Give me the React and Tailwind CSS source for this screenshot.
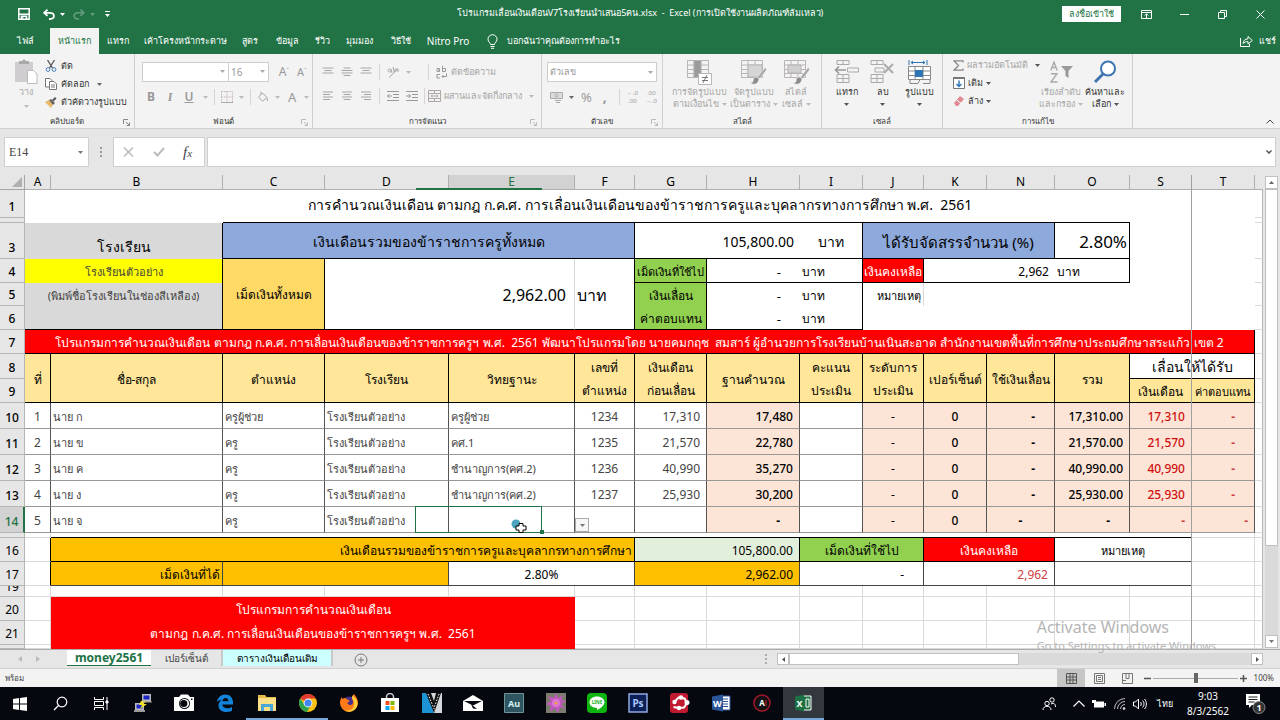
import React from "react";

/* ---------- small helpers ---------- */
const Caret = ({ className = "text-[#777]" }) => (
  <svg width="5" height="3" viewBox="0 0 5 3" className={`shrink-0 ${className}`} aria-hidden="true">
    <path d="M0 0h5L2.5 3z" fill="currentColor" />
  </svg>
);

const Launcher = ({ className = "text-[#888]" }) => (
  <svg width="7" height="7" viewBox="0 0 7 7" className={className} fill="none" stroke="currentColor" aria-hidden="true">
    <path d="M.5 5V.5H5M3 3l3.3 3.3M6.5 3.5v3h-3" />
  </svg>
);

const Group = ({ label, width, launcher, launcherTone, children }) => (
  <section aria-label={label} className={`relative flex h-[74px] shrink-0 flex-col border-r border-[#cfcfcf] [&_svg]:shrink-0 ${width}`}>
    <div className="h-[60px]">{children}</div>
    <div className="text-center text-[8px] leading-[14px] text-[#333]">{label}</div>
    {launcher && (
      <button aria-label={`${label} …`} className="absolute right-1 bottom-0.5">
        <Launcher className={launcherTone} />
      </button>
    )}
  </section>
);

const TopTab = ({ width, active, latin, children }) => (
  <button
    className={`h-[26px] shrink-0 text-center leading-[24px] whitespace-nowrap ${width} ${latin ? "text-[10px]" : "text-[9px]"} ${
      active ? "bg-[#f3f3f3] text-[#217346]" : "text-white"
    }`}
  >
    {children}
  </button>
);

/* ---------- title bar and tabs ---------- */
const TitleBar = () => (
  <header className="bg-[#217346] text-white">
    <div className="relative flex h-7 items-center">
      <div className="flex items-center pl-[18px]">
        <button aria-label="Save">
          <svg width="12" height="12" viewBox="0 0 12 12" fill="none" stroke="#fff">
            <path d="M.8.8h10.4v10.4H.8z" strokeWidth="1.5" />
            <path d="M1 6.2h10M3.5 11V8.3h5V11" strokeWidth="1.6" />
            <path d="M4.8 9v2" />
          </svg>
        </button>
        <button aria-label="Undo" className="ml-[13px] flex items-center gap-[5px]">
          <svg width="12" height="11" viewBox="0 0 12 11" fill="none" stroke="#fff" strokeWidth="1.8">
            <path d="M4.5.7L1.2 3.8l3.3 3.1M1.5 3.8h5.2c2.3 0 4.2 1.3 4.2 3.3S9 10 7 10H6" />
          </svg>
          <Caret className="text-white" />
        </button>
        <button aria-label="Redo" className="ml-2 flex items-center gap-[5px] opacity-30">
          <svg width="12" height="11" viewBox="0 0 12 11" fill="none" stroke="#fff" strokeWidth="1.6">
            <path d="M7.5.7l3.3 3.1-3.3 3.1M10.5 3.8H5.3C3 3.8 1.1 5.1 1.1 7.1S3 10 5 10h1" />
          </svg>
          <Caret className="text-white" />
        </button>
        <button aria-label="Customize" className="ml-2.5">
          <svg width="5" height="6" viewBox="0 0 5 6" fill="#fff">
            <path d="M0 0h5v1H0zM0 3h5L2.5 6z" />
          </svg>
        </button>
      </div>
      <h1 className="pointer-events-none absolute inset-x-0 top-[4px] text-center text-[9px] leading-[18px] whitespace-pre">
        โปรแกรมเลื่อนเงินเดือนV7โรงเรียนนำเสนอ5คน.xlsx  -  Excel (การเปิดใช้งานผลิตภัณฑ์ล้มเหลว)
      </h1>
      <div className="ml-auto flex items-center">
        <button className="h-4 w-[59px] bg-white text-[9px] leading-4 text-[#217346]">ลงชื่อเข้าใช้</button>
        <button aria-label="Ribbon options" className="ml-5">
          <svg width="11" height="9" viewBox="0 0 11 9" fill="none" stroke="#fff" className="block">
            <path d="M.5.5h10v8H.5zM.5 2.5h10M5.5 8V4M3.8 5.5l1.7-1.7 1.7 1.7" />
          </svg>
        </button>
        <button aria-label="Minimize" className="ml-[28px]">
          <svg width="9" height="9" viewBox="0 0 9 9" stroke="#fff" className="block"><path d="M0 4.5h9" /></svg>
        </button>
        <button aria-label="Restore" className="ml-[29px]">
          <svg width="9" height="9" viewBox="0 0 9 9" fill="none" stroke="#fff" className="block">
            <path d="M.5 2.5h6v6h-6zM2.5 2.5v-2h6v6h-2" />
          </svg>
        </button>
        <button aria-label="Close" className="mr-[15px] ml-[29px]">
          <svg width="9" height="9" viewBox="0 0 9 9" stroke="#fff" className="block"><path d="M.5.5l8 8M8.5.5l-8 8" /></svg>
        </button>
      </div>
    </div>
    <nav className="flex h-[26px]">
      <TopTab width="w-[50px]">ไฟล์</TopTab>
      <TopTab width="w-[49px]" active>หน้าแรก</TopTab>
      <TopTab width="w-[38px]">แทรก</TopTab>
      <TopTab width="w-[96px]">เค้าโครงหน้ากระดาษ</TopTab>
      <TopTab width="w-[34px]">สูตร</TopTab>
      <TopTab width="w-[40px]">ข้อมูล</TopTab>
      <TopTab width="w-[31px]">รีวิว</TopTab>
      <TopTab width="w-[43px]">มุมมอง</TopTab>
      <TopTab width="w-[40px]">วิธีใช้</TopTab>
      <TopTab width="w-[54px]" latin>Nitro Pro</TopTab>
      <button className="ml-3 flex items-center gap-[9px] text-[9px] leading-[24px] whitespace-nowrap">
        <svg width="11" height="15" viewBox="0 0 11 15" fill="none" stroke="#fff">
          <path d="M3.5 10.5c0-1.8-2.5-2.6-2.5-5.3a4.5 4.5 0 019 0c0 2.7-2.5 3.5-2.5 5.3zM3.5 12.5h4M4 14.3h3" />
        </svg>
        บอกฉันว่าคุณต้องการทำอะไร
      </button>
      <button className="ml-auto flex items-center gap-1.5 pr-1 text-[9px] leading-[24px]">
        <svg width="13" height="12" viewBox="0 0 13 12" fill="none" stroke="#fff">
          <path d="M.5 3v8.5h9V9M3 8.5C3.3 5.5 5 4 8 3.8V1.5l4.3 4L8 9V6.600C5.8 6.6 4.2 7.2 3 8.5z" />
        </svg>
        แชร์
      </button>
    </nav>
  </header>
);

/* ---------- ribbon ---------- */
const Lines = ({ w = [10, 10, 10, 10], align = "start" }) => (
  <svg width="12" height="10" viewBox="0 0 12 10" stroke="#a6a6a6" aria-hidden="true">
    {w.map((n, i) => {
      const x = align === "start" ? 1 : align === "end" ? 11 - n : 6 - n / 2;
      return <path key={i} d={`M${x} ${i * 2.5 + 1}h${n}`} />;
    })}
  </svg>
);

const Big = ({ icon, a, b, width, dark }) => (
  <button className={`flex shrink-0 flex-col items-center pt-[4px] text-[9px] leading-[12px] whitespace-nowrap ${width} ${dark ? "text-[#333]" : "text-[#a6a6a6]"}`}>
    <span className="flex h-[28px] items-center">{icon}</span>
    <span className="block">{a}</span>
    <span className="flex h-3 items-center gap-[3px]">
      {b}
      <Caret className={dark ? "text-[#555]" : "text-[#bbb]"} />
    </span>
  </button>
);

const TableGrid = ({ brush, children }) => (
  <svg width="27" height="27" viewBox="0 0 27 27" fill="none" stroke="#b8b4b8">
    <path d="M1.500 1.500h21v17h-21zM1.500 6h21M1.500 10.500h21M1.500 14.500h21M8 1.500v17M15 1.500v17" />
    {children}
    {brush && (
      <>
        <path d="M25.500 8l-8 10 2 2 7-9z" fill="#a6a6a6" stroke="#f3f3f3" strokeWidth=".6" />
        <path d="M17 18c-3 0-4 2-4 4 0 1-1 2-3 2 3 2 8 2 9-4z" fill="#8c8c8c" stroke="#f3f3f3" strokeWidth=".6" />
      </>
    )}
  </svg>
);

const Ribbon = () => (
  <div className="relative flex h-[75px] overflow-hidden border-b border-[#d0d0d0] bg-[#f3f3f3]">
    <Group label="คลิปบอร์ด" width="w-[135px]" launcher>
      <div className="flex pl-[14px]">
        <button className="flex w-[24px] flex-col items-center pt-[4px] text-[9px] leading-[14px] text-[#a6a6a6]">
          <svg width="24" height="27" viewBox="0 0 24 27">
            <path d="M1 4h18v20H1z" fill="#cfcdcf" />
            <path d="M5 3h3l2-2 2 2h3v3H5z" fill="#a9a9a9" />
            <path d="M13.500 12.500h6l3.500 3.500v9.500h-9.500z" fill="#fff" stroke="#bbb" />
          </svg>
          วาง
          <Caret className="mt-1.5 text-[#bbb]" />
        </button>
        <div className="ml-[7px] flex flex-col pt-[3px] text-[9px] leading-[18px] whitespace-nowrap text-[#333]">
          <button className="flex items-center gap-[4px]">
            <svg width="12" height="12" viewBox="0 0 12 12" fill="none">
              <path d="M2.500 0l5 8M9.500 0l-5 8" stroke="#555" strokeWidth="1.300" />
              <circle cx="3" cy="9.500" r="1.900" stroke="#4a7ebb" />
              <circle cx="9" cy="9.500" r="1.900" stroke="#4a7ebb" />
            </svg>
            ตัด
          </button>
          <button className="flex items-center gap-[4px]">
            <svg width="12" height="12" viewBox="0 0 12 12" fill="#fff" stroke="#777">
              <path d="M.5.500h4.500l2 2v6.500H.5z" />
              <path d="M4.500 3.500H9l2.500 2.500v5.500h-7zM6 7h4M6 9h4" />
            </svg>
            คัดลอก
            <Caret className="ml-1 text-[#666]" />
          </button>
          <button className="flex items-center gap-[4px]">
            <svg width="12" height="11" viewBox="0 0 12 11">
              <path d="M0 5l4-2 4 4-2 4z" fill="#e8b86a" />
              <path d="M4 3l2-1 4 4-2 2z" fill="#666" />
              <path d="M7 3l3-3 1.500 1.500-3 3z" fill="#555" />
            </svg>
            ตัวคัดวางรูปแบบ
          </button>
        </div>
      </div>
    </Group>

    <Group label="ฟอนต์" width="w-[178px]" launcher launcherTone="text-[#bbb]">
      <div className="flex items-center pt-2 pl-[7px]">
        <div className="relative">
          <select aria-label="ฟอนต์" defaultValue="" className="block h-5 w-[87px] appearance-none border border-[#cdcdcd] bg-white"><option></option></select>
          <Caret className="pointer-events-none absolute top-2 right-1 text-[#aaa]" />
        </div>
        <div className="relative">
          <select aria-label="ขนาดฟอนต์" className="block h-5 w-[40px] appearance-none border border-l-0 border-[#cdcdcd] bg-white pl-[2px] text-[10px] text-[#999]"><option>16</option></select>
          <Caret className="pointer-events-none absolute top-2 right-1 text-[#aaa]" />
        </div>
        <button className="ml-1.5 w-[18px] text-[12px] leading-4 text-[#999]">A<sup className="text-[7px]">ˆ</sup></button>
        <button className="w-[18px] text-[11px] leading-4 text-[#999]">A<sup className="text-[7px]">ˇ</sup></button>
      </div>
      <div className="flex h-6 items-center pt-1.5 pl-[8px] text-[12px] leading-4 text-[#999]">
        <button className="w-4 font-bold">B</button>
        <button className="ml-[3px] w-4 font-['Liberation_Serif',serif] font-bold italic">I</button>
        <button className="ml-[3px] w-4 font-semibold underline">U</button>
        <Caret className="ml-1.5 text-[#bbb]" />
        <span className="mx-1.5 h-4 w-px bg-[#d5d5d5]" />
        <svg width="12" height="12" viewBox="0 0 12 12" fill="none" stroke="#c5b5bb"><path d="M.5.500h11v11H.5zM6 .5v11M.5 6h11" strokeDasharray="1.500 1" /><path d="M0 11.500h12" stroke="#aaa" /></svg>
        <Caret className="ml-1.5 text-[#bbb]" />
        <span className="mx-1.5 h-4 w-px bg-[#d5d5d5]" />
        <svg width="12" height="12" viewBox="0 0 12 12" fill="none" stroke="#a6a6a6"><path d="M1.500 6L5.500 2l4.500 4.500-4.500 3.800zM4 3.500V.5M10.500 7.500v2.500" /></svg>
        <Caret className="ml-[6px] text-[#bbb]" />
        <button className="ml-2 text-[13px]">A</button>
        <Caret className="ml-2 text-[#bbb]" />
      </div>
    </Group>

    <Group label="การจัดแนว" width="w-[229px]" launcher launcherTone="text-[#bbb]">
      <div className="flex h-9 items-center gap-[7px] pl-[9px]">
        <Lines w={[11, 7, 11]} align="mid" />
        <Lines w={[7, 11, 11, 7]} align="mid" />
        <Lines w={[11, 7, 11]} align="mid" />
        <span className="h-4 w-px bg-[#d5d5d5]" />
        <svg width="12" height="12" viewBox="0 0 12 12" fill="none" stroke="#a6a6a6"><path d="M2 11.500L11 3M8 3h3v3M1 4.500a1.500 1.500 0 103 0 1.500 1.500 0 10-3 0M4 3l1 4M6 1l1.500 5M7 3.500a1.300 1.300 0 102 0" /></svg>
        <Caret className="text-[#bbb]" />
        <span className="ml-[10px] h-4 w-px bg-[#d5d5d5]" />
        <button className="flex items-center gap-1 text-[9px] leading-4 whitespace-nowrap text-[#a6a6a6]">
          <svg width="11" height="13" viewBox="0 0 11 13" fill="none" stroke="#999">
            <path d="M.5 2.500h3v3h-2c-1.300 0-1.300-1.500 0-1.500h2M6.500 0v5.500h3v-3h-3M4 8.500H1v3.500h3M10.500 7.500v3H6M7.500 9L6 10.500 7.500 12" />
          </svg>
          ตัดข้อความ
        </button>
      </div>
      <div className="flex h-3 items-center gap-[7px] pl-[9px]">
        <Lines w={[10, 7, 10, 7]} />
        <Lines w={[10, 7, 10, 7]} align="mid" />
        <Lines w={[10, 7, 10, 7]} align="end" />
        <span className="h-4 w-px bg-[#d5d5d5]" />
        <svg width="12" height="10" viewBox="0 0 12 10" stroke="#999" fill="none"><path d="M0 .5h12M6 3.500h6M6 6.500h6M0 9.500h12M5 5H.5M2.500 3L.5 5l2 2" /></svg>
        <svg width="12" height="10" viewBox="0 0 12 10" stroke="#999" fill="none"><path d="M0 .5h12M6 3.500h6M6 6.500h6M0 9.500h12M0 5h4.500M2.500 3l2 2-2 2" /></svg>
        <span className="-ml-px h-4 w-px bg-[#d5d5d5]" />
        <button className="-ml-1 flex items-center gap-[3px] text-[9px] leading-4 whitespace-nowrap text-[#a6a6a6]">
          <svg width="13" height="12" viewBox="0 0 13 12" fill="none" stroke="#b0a8a8"><path d="M.5.500h12v11H.5zM.5 3.500h12M.5 8.500h12M6.500.500v3M6.500 8.500v3M3 6h7M4.500 4.800L3 6l1.500 1.200M8.500 4.800L10 6 8.500 7.200" /></svg>
          ผสานและจัดกึ่งกลาง
          <Caret className="ml-1 text-[#bbb]" />
        </button>
      </div>
    </Group>

    <Group label="ตัวเลข" width="w-[121px]" launcher launcherTone="text-[#bbb]">
      <div className="relative ml-[5px] pt-2">
        <select aria-label="รูปแบบตัวเลข" className="block h-5 w-[110px] appearance-none border border-[#cdcdcd] bg-white pl-0.5 text-[9px] text-[#999]"><option>ตัวเลข</option></select>
        <Caret className="pointer-events-none absolute top-[17px] right-[9px] text-[#aaa]" />
      </div>
      <div className="flex h-6 items-center pt-1.5 pl-[8px] text-[#999]">
        <svg width="13" height="12" viewBox="0 0 13 12" fill="none" stroke="#aaa"><path d="M.5 1.500h12v6H.5z" fill="#ddd" /><circle cx="6.500" cy="4.500" r="1.500" /><path d="M5 9.500h6M6 11.500h4" /></svg>
        <Caret className="ml-1.5 text-[#666]" />
        <button className="ml-[7px] text-[13px] leading-4">%</button>
        <button className="ml-[11px] text-[14px] leading-4 font-bold">,</button>
        <span className="ml-3 h-4 w-px bg-[#d5d5d5]" />
        <button className="ml-[7px] text-[6px] leading-[8px]"><span className="block">←.0</span><span className="block">.00</span></button>
        <button className="ml-2 text-[6px] leading-[8px]"><span className="block">.00</span><span className="block">→.0</span></button>
      </div>
    </Group>

    <Group label="สไตล์" width="w-[159px]">
      <div className="flex pl-[6px]">
        <Big width="w-[61px]" a="การจัดรูปแบบ" b="ตามเงื่อนไข" icon={
          <TableGrid><path d="M8 1.500h7v17H8z" fill="#9a9a9a" /><path d="M12.500 14.500h13v11h-13z" fill="#fff" /><path d="M16 18.500h6M16 21.500h6M21 16l-4 8" stroke="#777" /></TableGrid>} />
        <Big width="w-[47px]" a="จัดรูปแบบ" b="เป็นตาราง" icon={<TableGrid brush><path d="M8 6h14v12H8z" fill="#d5d5d5" /></TableGrid>} />
        <Big width="w-[38px]" a="สไตล์" b="เซลล์" icon={<TableGrid brush><path d="M5 6h13v8H5z" fill="#d0d0d0" /></TableGrid>} />
      </div>
    </Group>

    <Group label="เซลล์" width="w-[121px]">
      <div className="flex pl-[6px]">
        <Big dark width="w-[37px]" a="แทรก" icon={
          <svg width="25" height="24" viewBox="0 0 25 24" fill="none" stroke="#aaa"><path d="M3 .5h12v4H3zM9 .5v4M3 14.500h12v8H3zM9 14.500v8M3 18.500h12M13.500 8h11v4h-11z" /><path d="M1.500 10H12M5 6.500L1.500 10 5 13.500" stroke="#999" strokeWidth="1.600" /></svg>} />
        <Big dark width="w-[35px]" a="ลบ" icon={
          <svg width="25" height="24" viewBox="0 0 25 24" fill="none" stroke="#aaa"><path d="M1 .5h12v4H1zM7 .5v4M1 14.500h12v8H1zM7 14.500v8M1 18.500h12M5 8h9v4H5z" /><path d="M14 4l9 9M23 4l-9 9" stroke="#aaa" strokeWidth="2" /></svg>} />
        <Big dark width="w-[38px]" a="รูปแบบ" icon={
          <svg width="25" height="25" viewBox="0 0 25 25" fill="none" stroke="#888"><path d="M1.500 6.500h22v13h-22z" fill="#fff" /><path d="M1.500 11h22M1.500 15.500h22M8 6.500v13M16 6.500v13M3 19.500v4h8l2-4M23 19.500v4h-7" /><path d="M8 10h8v7H8z" fill="#2e75b6" stroke="none" /><path d="M2 0v5M20 0v5M4 2.500h14M6 1L4 2.500 6 4M16 1l2 1.500L16 4" stroke="#2e75b6" /></svg>} />
      </div>
    </Group>

    <Group label="การแก้ไข" width="w-[190px]">
      <div className="flex pl-[10px]">
        <div className="flex w-[86px] shrink-0 flex-col pt-0.5 text-[9px] leading-[18px] whitespace-nowrap text-[#333]">
          <button className="flex items-center gap-[3px] text-[#a6a6a6]">
            <svg width="11" height="11" viewBox="0 0 11 11" fill="none" stroke="#888" strokeWidth="1.300"><path d="M10 2.500V.8H1L5.500 5.500 1 10.200h9V8.500" /></svg>
            ผลรวมอัตโนมัติ<Caret className="ml-1 text-[#555]" />
          </button>
          <button className="flex items-center gap-[3px]">
            <svg width="12" height="12" viewBox="0 0 12 12" fill="#fff" stroke="#777"><path d="M.5.500h11v11H.5z" /><path d="M.5 1h11" strokeWidth="2" /><path d="M6 3.500v6M3.500 7L6 9.500 8.500 7" stroke="#2e75b6" strokeWidth="1.400" fill="none" /></svg>
            เติม<Caret className="text-[#555]" />
          </button>
          <button className="flex items-center gap-[3px]">
            <svg width="12" height="12" viewBox="0 0 12 12"><path d="M1 8l6-7 4 3-6 7H3z" fill="#e08a96" /><path d="M3.500 5L8 8.300" stroke="#fff" /></svg>
            ล้าง<Caret className="text-[#555]" />
          </button>
        </div>
        <Big width="w-[44px]" a="เรียงลำดับ" b="และกรอง" icon={
          <span className="flex items-center gap-[3px]">
            <svg width="8" height="22" viewBox="0 0 8 22" fill="none" stroke="#aaa" strokeWidth="1.400"><path d="M.8 9.500L4 1l3.200 8.500M2 6.500h4M1 12.700h6L1 21h6.500" /></svg>
            <svg width="12" height="12" viewBox="0 0 12 12"><path d="M0 0h12L7.500 5v7L4.500 10V5z" fill="#999" /></svg>
          </span>} />
        <Big dark width="w-[44px]" a="ค้นหาและ" b="เลือก" icon={
          <svg width="24" height="24" viewBox="0 0 24 24" fill="none" stroke="#3f74b0"><circle cx="15" cy="8.500" r="7" fill="#fff" strokeWidth="2" /><path d="M10 14l-8 8" strokeWidth="3" /></svg>} />
      </div>
    </Group>
    <button aria-label="Collapse ribbon" className="mt-auto mr-1.5 mb-1 ml-auto">
      <svg width="8" height="5" viewBox="0 0 8 5" fill="none" stroke="#444"><path d="M.5 4.500L4 1l3.500 3.500" /></svg>
    </button>
  </div>
);

/* ---------- formula bar ---------- */
const FormulaBar = () => (
  <div className="flex h-[46px] items-start bg-[#e6e6e6] pt-2 pr-1 pl-1">
    <div className="relative">
      <input aria-label="Name box" defaultValue="E14" className="block h-[30px] w-[85px] border border-[#cfcfcf] bg-white pl-[4px] font-['Liberation_Serif',serif] text-[12px] text-[#444]" />
      <Caret className="pointer-events-none absolute top-[14px] right-1.5 text-[#777]" />
    </div>
    <svg width="3" height="30" viewBox="0 0 3 30" className="ml-[11px]" fill="#999"><path d="M0 10h2v2H0zM0 14h2v2H0zM0 18h2v2H0z" /></svg>
    <div className="ml-[10px] flex h-[30px] w-[92px] items-center border border-[#cfcfcf] bg-white">
      <button aria-label="Cancel" className="ml-[9px]"><svg width="11" height="10" viewBox="0 0 11 10" stroke="#bbb" strokeWidth="1.500"><path d="M1 .5l9 9M10 .5l-9 9" /></svg></button>
      <button aria-label="Enter" className="ml-[19px]"><svg width="12" height="10" viewBox="0 0 12 10" fill="none" stroke="#bbb" strokeWidth="2"><path d="M1 5l3.500 3.500L11 1" /></svg></button>
      <button className="ml-[18px] font-['Liberation_Serif',serif] text-[15px] leading-5 text-[#444] italic">f<span className="text-[11px]">x</span></button>
    </div>
    <div className="relative ml-[2px] flex-1">
      <input aria-label="Formula" className="block h-[30px] w-full border border-[#cfcfcf] bg-white px-2" />
      <svg width="6" height="4" viewBox="0 0 6 4" className="absolute top-[13px] right-1" fill="none" stroke="#555" strokeWidth="1.500"><path d="M.5.500L3 3 5.500.500" /></svg>
    </div>
  </div>
);

/* ---------- worksheet ---------- */
const Cell = ({ s, rs, c = "", children }) => (
  <td colSpan={s} rowSpan={rs} className={`overflow-hidden p-0 whitespace-pre ${children ? "pt-[2px]" : ""} ${c}`}>{children}</td>
);

const RowHead = ({ children, active, plain }) => (
  <th scope="row" className={`overflow-hidden border-r border-b border-[#b5b5b5] p-0 text-center align-bottom text-[12px] leading-[14px] ${children ? "pb-[3px]" : ""} ${plain ? "font-normal" : "font-medium"} ${active ? "border-r-2 border-r-[#217346] bg-[#d2d2d2] text-[#217346]" : "bg-[#e6e6e6] text-black"}`}>
    {children}
  </th>
);

const Edge = () => <Cell c="border-r border-b border-r-[#b5b5b5] border-b-[#d9d9d9]" />;

const people = [
  [10, "1", "นาย ก", "ครูผู้ช่วย", "ครูผู้ช่วย", "1234", "17,310", "17,480", "17,310.00", "17,310"],
  [11, "2", "นาย ข", "ครู", "คศ.1", "1235", "21,570", "22,780", "21,570.00", "21,570"],
  [12, "3", "นาย ค", "ครู", "ชำนาญการ(คศ.2)", "1236", "40,990", "35,270", "40,990.00", "40,990"],
  [13, "4", "นาย ง", "ครู", "ชำนาญการ(คศ.2)", "1237", "25,930", "30,200", "25,930.00", "25,930"],
];

const D = "border-r border-b border-r-[#555] border-b-[#999] text-[12px] leading-5 text-[#444]";
const T = "border-r border-b border-r-[#555] border-b-[#999] pl-[2px] text-[11px] leading-5 text-[#444]";
const P = "border-r border-b border-r-[#555] border-b-[#999] bg-[#fce4d6] text-[12px] leading-5 text-black";
const H = "border-r border-b border-black bg-[#ffe699] text-center text-[12px] leading-[23px] text-black";
const G = "border-r border-b border-[#d9d9d9]";

const blankCols = ["A", "B", "C", "D", "E", "F", "G", "H", "I", "J", "K", "N", "O", "S", "T"];

const Sheet = () => (
  <div className="flex bg-[#e6e6e6]">
    <table className="w-full min-w-0 flex-1 table-fixed border-separate border-spacing-0 bg-white">
      <colgroup>
        <col className="w-[25px]" /><col className="w-[26px]" /><col className="w-[172px]" /><col className="w-[102px]" />
        <col className="w-[124px]" /><col className="w-[126px]" /><col className="w-[60px]" /><col className="w-[72px]" />
        <col className="w-[93px]" /><col className="w-[63px]" /><col className="w-[61px]" /><col className="w-[63px]" />
        <col className="w-[68px]" /><col className="w-[75px]" /><col className="w-[62px]" /><col className="w-[63px]" />
        <col className="w-[8px]" />
      </colgroup>
      <thead>
        <tr className="h-[15px] bg-[#e6e6e6] text-[12px] leading-[14px] text-black">
          <td className="border-r border-b border-[#a6a6a6] p-0">
            <svg width="10" height="10" viewBox="0 0 10 10" className="mr-[2px] ml-auto block"><path d="M10 0v10H0z" fill="#b0b0b0" /></svg>
          </td>
          {blankCols.map((n) => (
            <th key={n} scope="col" className={`relative border-r border-b border-[#b0b0b0] p-0 text-center font-normal ${n === "E" ? "bg-[#d2d2d2] text-[#217346]" : ""}`}>
              {n}
              {n === "E" && <span className="absolute -bottom-px -left-[33px] h-0.5 w-[126px] bg-[#217346]" />}
              {n === "S" && <span className="absolute top-0 -right-px z-10 h-[474px] w-px bg-[#a0a0a0]" />}
            </th>
          ))}
          <td className="border-b border-[#b0b0b0] p-0" />
        </tr>
      </thead>
      <tbody>
        <tr className="h-7">
          <RowHead>1</RowHead>
          <Cell s={15} c="pt-1.5 text-center text-[14px] leading-[22px] text-black">การคำนวณเงินเดือน ตามกฎ ก.ค.ศ. การเลื่อนเงินเดือนของข้าราชการครูและบุคลากรทางการศึกษา พ.ศ.  2561</Cell>
          <Edge />
        </tr>
        <tr className="h-[5px]">
          <RowHead />
          <Cell s={2} />
          <Cell s={11} c="border-b border-black" />
          <Cell s={2} />
          <Edge />
        </tr>
        <tr className="h-9">
          <RowHead>3</RowHead>
          <Cell s={2} c="border-r border-black bg-[#d9d9d9] text-center align-bottom text-[14px] leading-6 text-black">โรงเรียน</Cell>
          <Cell s={4} c="border-r border-b border-black bg-[#8ea9db] text-center text-[14px] leading-[30px] text-black">เงินเดือนรวมของข้าราชการครูทั้งหมด</Cell>
          <Cell s={2} c="border-b border-black pr-1.5 text-right text-[14px] leading-[30px] text-black">105,800.00</Cell>
          <Cell c="border-r border-b border-black text-center text-[14px] leading-[30px] text-black">บาท</Cell>
          <Cell s={3} c="border-r border-b border-black bg-[#8ea9db] text-center text-[15px] leading-[30px] text-black">ได้รับจัดสรรจำนวน (%)</Cell>
          <Cell c="border-r border-b border-black pr-[2px] text-right text-[17px] leading-[30px] text-black">2.80%</Cell>
          <Cell s={2} />
          <Edge />
        </tr>
        <tr className="h-6">
          <RowHead>4</RowHead>
          <Cell s={2} c="border-r border-black bg-[#ffff00] text-center text-[11px] leading-5 text-[#444]">โรงเรียนตัวอย่าง</Cell>
          <Cell rs={3} c="border-r border-b border-black bg-[#ffd966] text-center text-[12px] leading-5 text-black">เม็ดเงินทั้งหมด</Cell>
          <Cell s={2} rs={3} c="border-r border-b border-r-[#d9d9d9] border-b-black pr-2 text-right text-[16px] leading-6 text-black">2,962.00</Cell>
          <Cell rs={3} c="border-r border-b border-black pl-[2px] text-left text-[16px] leading-6 text-black">บาท</Cell>
          <Cell c="border-r border-b border-black bg-[#92d050] text-center text-[11px] leading-5 text-black">เม็ดเงินที่ใช้ไป</Cell>
          <Cell c="border-b border-black pr-[19px] text-right text-[13px] leading-5 text-black">-</Cell>
          <Cell c="border-r border-b border-black pl-[2px] text-[12px] leading-5 text-black">บาท</Cell>
          <Cell c="border-r border-b border-black bg-[#ff0000] text-center text-[12px] leading-5 text-white">เงินคงเหลือ</Cell>
          <Cell s={2} c="border-b border-black pr-1.5 text-right text-[12px] leading-5 text-black">2,962</Cell>
          <Cell c="border-r border-b border-black pl-[2px] text-[12px] leading-5 text-black">บาท</Cell>
          <Cell s={2} />
          <Edge />
        </tr>
        <tr className="h-[23px]">
          <RowHead>5</RowHead>
          <Cell s={2} c="border-r border-black bg-[#d9d9d9] text-center text-[11px] leading-5 text-[#444]">(พิมพ์ชื่อโรงเรียนในช่องสีเหลือง)</Cell>
          <Cell c="border-r border-black bg-[#92d050] text-center text-[12px] leading-5 text-black">เงินเลื่อน</Cell>
          <Cell c="pr-[19px] text-right text-[13px] leading-5 text-black">-</Cell>
          <Cell c="border-r border-black pl-[2px] text-[12px] leading-5 text-black">บาท</Cell>
          <Cell c="border-r border-[#d9d9d9] pr-[2px] text-right text-[11px] leading-5 text-black">หมายเหตุ</Cell>
          <Cell s={5} />
          <Edge />
        </tr>
        <tr className="h-6">
          <RowHead>6</RowHead>
          <Cell s={2} c="border-r border-b border-black bg-[#d9d9d9]" />
          <Cell c="border-r border-b border-black bg-[#92d050] text-center text-[12px] leading-5 text-black">ค่าตอบแทน</Cell>
          <Cell c="border-b border-black pr-[19px] text-right text-[13px] leading-5 text-black">-</Cell>
          <Cell c="border-r border-b border-black pl-[2px] text-[12px] leading-5 text-black">บาท</Cell>
          <Cell s={6} />
          <Edge />
        </tr>
        <tr className="h-6">
          <RowHead>7</RowHead>
          <Cell s={15} c="border-r border-b border-black bg-[#ff0000] text-center text-[12px] leading-5 text-white">โปรแกรมการคำนวณเงินเดือน ตามกฎ ก.ค.ศ. การเลื่อนเงินเดือนของข้าราชการครูฯ พ.ศ.  2561 พัฒนาโปรแกรมโดย นายคมกฤช  สมสาร์ ผู้อำนวยการโรงเรียนบ้านเนินสะอาด สำนักงานเขตพื้นที่การศึกษาประถมศึกษาสระแก้ว เขต 2</Cell>
          <Edge />
        </tr>
        <tr className="h-[25px]">
          <RowHead>8</RowHead>
          <Cell rs={2} c={H}>ที่</Cell>
          <Cell rs={2} c={H}>ชื่อ-สกุล</Cell>
          <Cell rs={2} c={H}>ตำแหน่ง</Cell>
          <Cell rs={2} c={H}>โรงเรียน</Cell>
          <Cell rs={2} c={H}>วิทยฐานะ</Cell>
          <Cell rs={2} c={H}>เลขที่<br />ตำแหน่ง</Cell>
          <Cell rs={2} c={H}>เงินเดือน<br />ก่อนเลื่อน</Cell>
          <Cell rs={2} c={H}>ฐานคำนวณ</Cell>
          <Cell rs={2} c={H}>คะแนน<br />ประเมิน</Cell>
          <Cell rs={2} c={H}>ระดับการ<br />ประเมิน</Cell>
          <Cell rs={2} c={H}>เปอร์เซ็นต์</Cell>
          <Cell rs={2} c={H}>ใช้เงินเลื่อน</Cell>
          <Cell rs={2} c={H}>รวม</Cell>
          <Cell s={2} c="border-r border-b border-black text-center text-[14px] leading-[20px] text-black">เลื่อนให้ได้รับ</Cell>
          <Edge />
        </tr>
        <tr className="h-6">
          <RowHead>9</RowHead>
          <Cell c="border-r border-b border-black bg-[#ffe699] text-center text-[12px] leading-5 text-black">เงินเดือน</Cell>
          <Cell c="border-r border-b border-black bg-[#ffe699] text-center text-[11px] leading-5 text-black">ค่าตอบแทน</Cell>
          <Edge />
        </tr>
        {people.map(([row, no, name, post, rank, code, before, base, total, pay]) => (
          <tr key={row} className="h-[26px]">
            <RowHead>{row}</RowHead>
            <Cell c={`${D} text-center`}>{no}</Cell>
            <Cell c={T}>{name}</Cell>
            <Cell c={T}>{post}</Cell>
            <Cell c={T}>โรงเรียนตัวอย่าง</Cell>
            <Cell c={T}>{rank}</Cell>
            <Cell c={`${D} text-center`}>{code}</Cell>
            <Cell c={`${D} pr-1.5 text-right`}>{before}</Cell>
            <Cell c={`${P} pr-1.5 text-right font-medium`}>{base}</Cell>
            <Cell c={D} />
            <Cell c={`${P} text-center`}>-</Cell>
            <Cell c={`${P} text-center font-medium`}>0</Cell>
            <Cell c={`${P} pr-[19px] text-right font-bold`}>-</Cell>
            <Cell c={`${P} pr-1.5 text-right font-medium`}>{total}</Cell>
            <Cell c="border-r border-b border-r-[#999] border-b-[#999] bg-[#fce4d6] pr-1.5 text-right text-[12px] leading-5 font-medium text-[#d01010]">{pay}</Cell>
            <Cell c="border-r border-b border-r-[#555] border-b-[#999] bg-[#fce4d6] pr-[19px] text-right text-[12px] leading-5 font-bold text-[#d04040]">-</Cell>
            <Edge />
          </tr>
        ))}
        <tr className="h-[26px]">
          <RowHead active>14</RowHead>
          <Cell c={`${D} text-center`}>5</Cell>
          <Cell c={T}>นาย จ</Cell>
          <Cell c={T}>ครู</Cell>
          <Cell c={T}>โรงเรียนตัวอย่าง</Cell>
          <td className={`relative p-0 ${D}`}>
            <span className="absolute -top-px -left-[34px] h-[27px] w-[127px] border border-[#217346]" />
            <span className="absolute -bottom-[2px] left-[91px] h-1 w-1 bg-[#217346]" />
            <svg width="20" height="20" viewBox="0 0 20 20" className="absolute top-[10px] left-[60px] z-10">
              <circle cx="7" cy="7" r="4.500" fill="#4ba3bf" />
              <path d="M10 6.500h4v2.500h3v4h-3v2.500h-4V13H7V9h3z" fill="#fff" stroke="#000" />
            </svg>
          </td>
          <td className={`relative p-0 ${D}`}>
            <button aria-label="Open list" className="absolute top-[11px] left-0 flex h-[14px] w-[14px] items-center justify-center border border-[#aaa] bg-[#f6f6f6]"><Caret /></button>
          </td>
          <Cell c={D} />
          <Cell c={`${P} pr-[19px] text-right font-bold`}>-</Cell>
          <Cell c={D} />
          <Cell c={`${P} text-center`}>-</Cell>
          <Cell c={`${P} text-center font-medium`}>0</Cell>
          <Cell c={`${P} text-center font-bold`}>-</Cell>
          <Cell c={`${P} pr-[19px] text-right font-bold`}>-</Cell>
          <Cell c="border-r border-b border-r-[#999] border-b-[#999] bg-[#fce4d6] pr-1.5 text-right text-[12px] leading-5 font-bold text-[#d04040]">-</Cell>
          <Cell c="border-r border-b border-r-[#555] border-b-[#999] bg-[#fce4d6] pr-1.5 text-right text-[12px] leading-5 font-bold text-[#d04040]">-</Cell>
          <Edge />
        </tr>
        <tr className="h-[5px]">
          <RowHead />
          <Cell c={G} />
          <Cell s={13} c="border-b border-black" />
          <Cell c={G} />
          <Edge />
        </tr>
        <tr className="h-6">
          <RowHead plain>16</RowHead>
          <Cell c="border-r border-b border-r-black border-b-[#d9d9d9]" />
          <Cell s={5} c="border-r border-b border-black bg-[#ffc000] pr-[2px] text-right text-[12px] leading-5 text-black">เงินเดือนรวมของข้าราชการครูและบุคลากรทางการศึกษา</Cell>
          <Cell s={2} c="border-r border-b border-black bg-[#e2efda] pr-1.5 text-right text-[12px] leading-5 text-black">105,800.00</Cell>
          <Cell s={2} c="border-r border-b border-black bg-[#92d050] text-center text-[12px] leading-5 text-black">เม็ดเงินที่ใช้ไป</Cell>
          <Cell s={2} c="border-r border-b border-black bg-[#ff0000] text-center text-[12px] leading-5 text-white">เงินคงเหลือ</Cell>
          <Cell s={2} c="border-r border-b border-[#444] text-center text-[11px] leading-5 text-black">หมายเหตุ</Cell>
          <Cell c={G} />
          <Edge />
        </tr>
        <tr className="h-6">
          <RowHead plain>17</RowHead>
          <Cell c="border-r border-b border-r-black border-b-[#d9d9d9]" />
          <Cell c="border-r border-b border-[#444] bg-[#ffc000] pr-[2px] text-right text-[12px] leading-5 text-black">เม็ดเงินที่ได้</Cell>
          <Cell s={2} c="border-r border-b border-[#444] bg-[#ffc000]" />
          <Cell s={2} c="border-r border-b border-[#444] text-center text-[12px] leading-5 text-black">2.80%</Cell>
          <Cell s={2} c="border-r border-b border-[#444] bg-[#ffc000] pr-1.5 text-right text-[12px] leading-5 text-black">2,962.00</Cell>
          <Cell s={2} c="border-r border-b border-[#444] pr-[19px] text-right text-[12px] leading-5 text-black">-</Cell>
          <Cell s={2} c="border-r border-b border-[#444] pr-1.5 text-right text-[12px] leading-5 text-[#d04040]">2,962</Cell>
          <Cell s={2} c="border-r border-b border-[#444]" />
          <Cell c={G} />
          <Edge />
        </tr>
        <tr className="h-[11px]">
          <th scope="row" className="relative overflow-hidden border-r border-b border-[#b5b5b5] bg-[#e6e6e6] p-0 text-[12px] font-normal text-black">
            <span className="absolute inset-x-0 bottom-0 h-[10px] overflow-hidden"><span className="absolute inset-x-0 bottom-[2px] leading-[14px]">19</span></span>
          </th>
          {blankCols.map((n) => <Cell key={n} c={G} />)}
          <Edge />
        </tr>
        {[
          [20, "h-6", "โปรแกรมการคำนวณเงินเดือน"],
          [21, "h-6", "ตามกฎ ก.ค.ศ. การเลื่อนเงินเดือนของข้าราชการครูฯ พ.ศ.  2561"],
          ["", "h-1", ""],
        ].map(([row, h, text]) => (
          <tr key={h + row} className={h}>
            <RowHead plain>{row}</RowHead>
            <Cell c={G} />
            <Cell s={4} c="bg-[#ff0000] pt-1 text-center text-[12px] leading-5 text-white">{text}</Cell>
            {blankCols.slice(5).map((n) => <Cell key={n} c={G} />)}
            <Edge />
          </tr>
        ))}
      </tbody>
    </table>
    <div className="flex w-[17px] shrink-0 flex-col items-center bg-[#e6e6e6]">
      <button aria-label="Scroll up" className="mt-px flex h-[13px] w-[13px] items-center justify-center border border-[#c0c0c0] bg-white">
        <svg width="5" height="3" viewBox="0 0 5 3"><path d="M0 3h5L2.500 0z" fill="#666" /></svg>
      </button>
      <div className="flex w-[13px] flex-1 flex-col bg-[#dadada]">
        <div className="h-[357px] border border-[#c0c0c0] bg-white" />
      </div>
      <button aria-label="Scroll down" className="mb-px flex h-[13px] w-[13px] items-center justify-center border border-[#c0c0c0] bg-white"><Caret /></button>
    </div>
  </div>
);

/* ---------- sheet tabs and status ---------- */
const SheetTabs = () => (
  <div className="flex h-[19px] items-start border-t border-[#ababab] bg-[#e6e6e6] text-[12px] leading-[15px]">
    <div className="flex h-[18px] w-[67px] items-center gap-[14px] pl-[18px]">
      <svg width="4" height="6" viewBox="0 0 4 6"><path d="M4 0v6L0 3z" fill="#bbb" /></svg>
      <svg width="4" height="6" viewBox="0 0 4 6"><path d="M0 0v6l4-3z" fill="#bbb" /></svg>
    </div>
    <button className="h-4 w-[84px] border-b border-[#217346] bg-white text-[12px] leading-[14px] font-bold text-[#217346]">money2561</button>
    <button className="h-4 w-[70px] text-[10px] leading-[14px] whitespace-nowrap text-[#444]">เปอร์เซ็นต์</button>
    <button className="h-4 w-[112px] border-x-2 border-[#c8c8c8] bg-[#ccffff] text-[10px] leading-[14px] whitespace-nowrap text-black">ตารางเงินเดือนเดิม</button>
    <button aria-label="New sheet" className="mt-[3px] ml-[21px]">
      <svg width="14" height="14" viewBox="0 0 14 14" fill="none" stroke="#777" className="block"><circle cx="7" cy="7" r="6" /><path d="M7 4v6M4 7h6" /></svg>
    </button>
    <div className="mr-[17px] ml-auto flex h-[18px] w-[498px] items-center">
      <svg width="2" height="10" viewBox="0 0 2 10" fill="#aaa"><path d="M0 0h2v2H0zM0 4h2v2H0zM0 8h2v2H0z" /></svg>
      <button aria-label="Scroll left" className="ml-[10px] flex h-3 w-3 items-center justify-center border border-[#c0c0c0] bg-white"><svg width="3" height="5" viewBox="0 0 3 5"><path d="M3 0v5L0 2.500z" fill="#555" /></svg></button>
      <div className="flex h-3 flex-1 bg-[#dadada]"><div className="w-[230px] border border-[#c0c0c0] bg-white" /></div>
      <button aria-label="Scroll right" className="flex h-3 w-3 items-center justify-center border border-[#c0c0c0] bg-white"><svg width="3" height="5" viewBox="0 0 3 5"><path d="M0 0v5l3-2.500z" fill="#555" /></svg></button>
    </div>
  </div>
);

const StatusBar = () => (
  <div className="flex h-[19px] items-center border-t border-[#d0d0d0] bg-[#f3f3f3] pr-1.5 pl-[5px] text-[9px] text-[#444]">
    <span className="text-[8px]">พร้อม</span>
    <button aria-label="Normal view" className="ml-auto flex h-[18px] w-7 items-center justify-center bg-[#c6c6c6]">
      <svg width="11" height="11" viewBox="0 0 11 11" fill="none" stroke="#555"><path d="M.5.500h10v10H.5zM4 .5v10M7 .5v10M.5 4h10M.5 7h10" /></svg>
    </button>
    <button aria-label="Page layout" className="flex w-7 justify-center"><svg width="11" height="11" viewBox="0 0 11 11" fill="none" stroke="#777"><path d="M.5.500h10v10H.5zM2.500 2.500h6v6h-6zM4 4.500h3M4 6.500h3" /></svg></button>
    <button aria-label="Page break" className="flex w-7 justify-center"><svg width="11" height="11" viewBox="0 0 11 11" fill="none" stroke="#777"><path d="M.5.500h10v10H.5zM4 .5v5h3v-5M.5 7.500H4" /></svg></button>
    <button aria-label="Zoom out" className="ml-[3px]"><svg width="7" height="7" viewBox="0 0 7 7" stroke="#555" strokeWidth="1.500"><path d="M0 3.500h7" /></svg></button>
    <input
      type="range" aria-label="Zoom" defaultValue="50"
      className="mx-[2px] h-[10px] w-[85px] appearance-none bg-[linear-gradient(#aaa,#aaa)] bg-[length:100%_1px] bg-center bg-no-repeat [&::-webkit-slider-thumb]:h-[10px] [&::-webkit-slider-thumb]:w-1 [&::-webkit-slider-thumb]:appearance-none [&::-webkit-slider-thumb]:bg-[#666]"
    />
    <button aria-label="Zoom in"><svg width="7" height="7" viewBox="0 0 7 7" stroke="#555" strokeWidth="1.500"><path d="M0 3.500h7M3.500 0v7" /></svg></button>
    <span className="ml-[6px] w-[21px] text-right text-[8px]">100%</span>
  </div>
);

/* ---------- taskbar ---------- */
const S = ({ children }) => <svg width="20" height="20" viewBox="0 0 20 20" className="block">{children}</svg>;

const apps = [
  ["PuTTY", <S><path d="M9 1h9v8H9zM2 10h9v7H2z" fill="#bbb" /><path d="M10.500 2.500h6v4h-6zM3.500 11.500h6v4h-6z" fill="#1b25c4" /><path d="M8 8h6l-4 3h4l-7 5 2-4H6z" fill="#f3e328" /><path d="M1 17h11v2H1zM10 8.500h9v1h-9z" fill="#999" /></S>],
  ["Camera", <S><path d="M0 4h5l2-2.500h7L16 4h4v14H0z" fill="#fff" /><circle cx="10.500" cy="10.500" r="5.500" fill="#05080f" /><circle cx="10.500" cy="10.500" r="4.600" fill="#fff" /><circle cx="9.800" cy="10.500" r="3.600" fill="#05080f" /><path d="M17 5.500h1.500v1.500H17z" fill="#05080f" /></S>],
  ["Edge", <S><path d="M2 9C2.500 4.500 6 1.500 10.300 1.500c4.700 0 7.700 3.500 7.700 8v2H7.300c.2 2.500 2.200 3.700 5 3.700 1.800 0 3.500-.5 4.700-1.300v3.800c-1.500.8-3.400 1.200-5.500 1.200-5 0-8-2.500-8-6.500 0-2.400 1.300-4.500 3.500-5.700C4.700 7 3 7.800 2 9zm5.400-.7h6c0-2-1.100-3.200-2.900-3.200-1.700 0-2.800 1.300-3.100 3.200z" fill="#1383da" /></S>],
  ["Explorer", <S><path d="M1 2h7l1.500 2H19v14H1z" fill="#e9b94a" /><path d="M1 5h18v13H1z" fill="#fbe08a" /><path d="M4 18v-7h12v7h-3v-4H7v4z" fill="#4aa8d8" /></S>, "open"],
  ["Chrome", <S><circle cx="10" cy="10" r="9" fill="#fbc116" /><path d="M10 10L2.200 5.500A9 9 0 0117.800 5.500H10z" fill="#e23b2e" /><path d="M2.200 5.500A9 9 0 009 19l4-7-3-2-4 1z" fill="#2da14b" /><circle cx="10" cy="10" r="4.400" fill="#fff" /><circle cx="10" cy="10" r="3.500" fill="#4285f4" /></S>, "open"],
  ["Firefox", <S><circle cx="10.500" cy="10.500" r="7" fill="#46308f" /><path d="M3 4c0 1 .2 1.500.5 2C5 4.500 7 5 8 6.500c2 .2 3 1.200 2 2.200-2 .6-2 2 0 3 2.200 1 4-.5 4-2.500 0-2.500-1.500-3-1-5 .3-1.600 1.500-2.700 2.500-3.200 0 2 3.500 3.500 3.500 9a9 9 0 11-18 0c0-2.500.6-4.500 2-6z" fill="#ff7a18" /><path d="M14 2c0 2 4.500 4 4.500 8.500A8.500 8.500 0 015 17c9 3 13-6 8-12z" fill="#ffd23c" /></S>],
  ["Store", <S><path d="M6.500 6V4a3.500 3.500 0 017 0v2" fill="none" stroke="#ccc" strokeWidth="1.500" /><path d="M1 5h18v14H1z" fill="#fff" /><path d="M5.500 8h4v4h-4z" fill="#f25022" /><path d="M10.500 8h4v4h-4z" fill="#7fba00" /><path d="M5.500 13h4v4h-4z" fill="#00a4ef" /><path d="M10.500 13h4v4h-4z" fill="#ffb900" /></S>],
  ["Video editor", <S><path d="M0 0h20v20H0z" fill="#d5d8da" /><path d="M0 0h5l7 20H0z" fill="#1c93d4" /><path d="M4 0h5l3 8 2-8h5l-7 20z" fill="#111" /><path d="M6 1l7 17M17 1l-5 14" stroke="#fff" strokeDasharray="1.500 1.500" /></S>],
  ["Mail", <S><path d="M0 8l10-6 10 6v10H0z" fill="#fff" /><path d="M1 8h18l-9 4.500z" fill="#05080f" /><path d="M8 11l6 5-4-.500z" fill="#05080f" /></S>],
  ["Audition", <S><path d="M.5.500h19v19H.5z" fill="#2f5660" stroke="#6e949c" /><text x="10" y="13.500" fontSize="9" fontWeight="700" textAnchor="middle" fill="#d5f0f5">Au</text></S>],
  ["Flower", <S><path d="M0 0h20v20H0z" fill="#7c7c6e" /><path d="M10 0l2 5 5-3-2 5 5 1-5 3 4 5-5-2-2 6-3-5-5 4 1-6-5-2 5-3-3-5 6 2z" fill="#c558c0" /><circle cx="10" cy="10" r="4" fill="#d978d6" /><circle cx="10" cy="10" r="1.500" fill="#f0a040" /></S>],
  ["LINE", <S><rect width="20" height="20" rx="4" fill="#0fb50f" /><path d="M10 3.500c4.300 0 7.500 2.600 7.500 5.800 0 3-4 6-7.500 8v-2.300c-4.300 0-7.500-2.500-7.500-5.700S5.700 3.500 10 3.500z" fill="#fff" /><text x="10" y="11" fontSize="4.500" fontWeight="700" textAnchor="middle" fill="#0fb50f">LINE</text></S>],
  ["Photoshop", <S><path d="M1 1h18v18H1z" fill="#0c1f57" stroke="#8fa8e0" strokeWidth="1.500" /><text x="10" y="13.500" fontSize="10" fontWeight="700" textAnchor="middle" fill="#a9c8ff">Ps</text></S>],
  ["Nitro", <S><rect width="18" height="20" rx="3" fill="#c21933" /><path d="M4.500 9l4-4.500 6 1 2.500 4.500-3 4.500-5.500.5-5-1" fill="none" stroke="#fff" strokeWidth="2" /><circle cx="11" cy="4.500" r="2.300" fill="#fff" /><circle cx="17" cy="9.500" r="2.500" fill="#fff" /><circle cx="4.500" cy="9" r="2.200" fill="#fff" /><circle cx="9" cy="15" r="2.200" fill="#fff" /></S>],
  ["Word", <S><path d="M10 3h9v14h-9z" fill="#fff" stroke="#2b579a" /><path d="M12 6h5M12 8.500h5M12 11h5M12 13.500h5" stroke="#2b579a" /><path d="M1 3.500L12 1.500v17L1 16.500z" fill="#2b579a" /><text x="6.300" y="13.500" fontSize="9" fontWeight="700" textAnchor="middle" fill="#fff">W</text></S>],
  ["Recorder", <S><circle cx="10" cy="10" r="8" fill="#111" stroke="#a3182c" strokeWidth="1.500" /><text x="10" y="13" fontSize="8" fontWeight="700" textAnchor="middle" fill="#fff">A</text><path d="M14 7v6" stroke="#d02030" /></S>],
  ["Excel", <S><path d="M10 3h8v14h-8z" fill="#1d7044" stroke="#fff" /><path d="M13 6h3v8h-3z" fill="none" stroke="#fff" /><path d="M2 3.500l9-2v17l-9-2z" fill="#1d7044" /><text x="6.500" y="13.500" fontSize="9" fontWeight="700" textAnchor="middle" fill="#fff">X</text></S>, "active"],
];

const Taskbar = () => (
  <footer className="flex h-[33px] bg-[#05080f] text-white">
    <button aria-label="Start" className="flex w-10 items-center justify-center"><svg width="14" height="14" viewBox="0 0 14 14" fill="#fff"><path d="M0 2l6-.9v5.400H0zM7 1l7-1v6.500H7zM0 7.500h6v5.400L0 12zM7 7.500h7V14l-7-1z" /></svg></button>
    <button aria-label="Search" className="flex w-[41px] items-center justify-center"><svg width="15" height="15" viewBox="0 0 15 15" fill="none" stroke="#fff" strokeWidth="1.200"><circle cx="9" cy="6" r="4.800" /><path d="M5.500 9.500L1 14" /></svg></button>
    <button aria-label="Task view" className="flex w-[41px] items-center justify-center"><svg width="15" height="13" viewBox="0 0 15 13" fill="none" stroke="#fff"><path d="M.5 0v2.500h9V0M.5 4.500h9v4h-9zM.5 13v-2.500h9V13M13 0v13" /><path d="M12 4h2v2h-2z" fill="#fff" /></svg></button>
    <div className="flex w-[702px]">
      {apps.map(([name, icon, state]) => (
        <button key={name} aria-label={name} className={`flex flex-1 items-center justify-center border-b-2 ${state === "active" ? "border-[#76a9d8] bg-[#33373e]" : state === "open" ? "border-[#76a9d8]" : "border-transparent"}`}>
          {icon}
        </button>
      ))}
    </div>
    <div className="ml-auto flex items-center pr-[14px]">
      <svg width="14" height="14" viewBox="0 0 14 14" fill="none" stroke="#fff"><circle cx="5" cy="6.500" r="2.200" /><path d="M1 13c0-5 8-5 8 0" /><circle cx="10" cy="3" r="2.200" /><path d="M9 7c3-1.500 4.500 0 4.500 3" /></svg>
      <svg width="12" height="7" viewBox="0 0 12 7" fill="none" stroke="#fff" strokeWidth="1.200" className="ml-[17px]"><path d="M.5 6.500L6 1l5.500 5.500" /></svg>
      <svg width="14" height="10" viewBox="0 0 14 10" className="ml-[7px]"><path d="M2 2.500h10v6H2z" fill="#fff" /><path d="M12.500 4h1.500v3h-1.500zM0 1h4v3H0z" fill="#fff" /></svg>
      <svg width="12" height="12" viewBox="0 0 12 12" fill="none" stroke="#bbb" className="ml-[8px]"><path d="M.5 11A10.500 10.500 0 0111 .5M3.500 11A7.500 7.500 0 0111 3.500M6.500 11A4.500 4.500 0 0111 6.500" /><circle cx="10" cy="10.500" r="1" fill="#fff" /></svg>
      <svg width="14" height="12" viewBox="0 0 14 12" fill="none" stroke="#fff" className="ml-[7px]"><path d="M.5 4h2L5.500 1v10L2.500 8h-2zM7.500 4c1 1 1 3 0 4M9.500 2.500c2 2 2 5 0 7M11.500 1c2.500 3 2.500 7 0 10" /></svg>
      <span className="ml-[9px] w-[18px] text-center text-[9px]">ไทย</span>
      <div className="ml-2.5 w-[48px] text-center text-[10px] leading-[15px]">9:03<br />8/3/2562</div>
      <svg width="20" height="22" viewBox="0 0 20 22" className="ml-[14px]"><path d="M0 1h14v11H6l-3 3v-3H0z" fill="#fff" /><path d="M2.500 4h9M2.500 6.500h9M2.500 9h6" stroke="#222" /><circle cx="13" cy="14.500" r="6" fill="#333" stroke="#888" /><text x="13" y="18" fontSize="9" fontWeight="700" textAnchor="middle" fill="#fff">1</text></svg>
    </div>
  </footer>
);

export default function App() {
  return (
    <div className="relative flex min-h-screen flex-col overflow-hidden bg-[#e6e6e6] font-['Noto_Sans','Open_Sans',sans-serif]">
      <TitleBar />
      <Ribbon />
      <FormulaBar />
      <Sheet />
      <SheetTabs />
      <StatusBar />
      <div className="mt-auto"><Taskbar /></div>
      <div className="pointer-events-none absolute right-[61px] bottom-[65px] z-20 text-[#b5b5b5]">
        <div className="text-[16px] leading-5">Activate Windows</div>
        <div className="text-[11px] leading-[18px]">Go to Settings to activate Windows.</div>
      </div>
    </div>
  );
}
